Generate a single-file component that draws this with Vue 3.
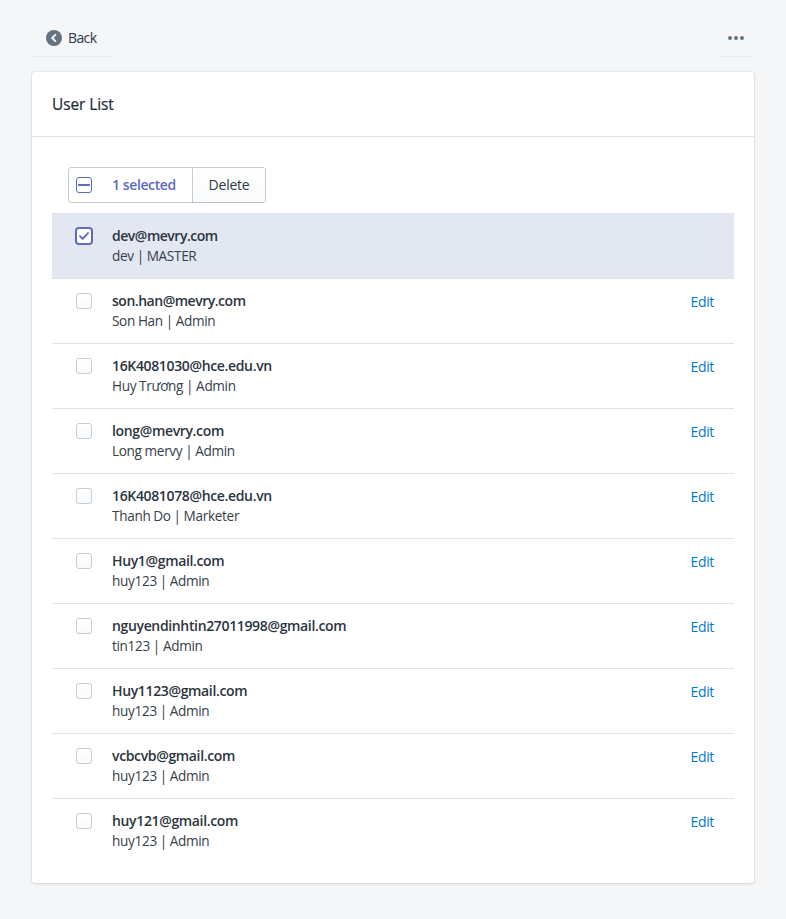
<script setup>
import { ref } from 'vue'

const users = ref([
  { email: 'dev@mevry.com', name: 'dev', role: 'MASTER', selected: true, tight: true },
  { email: 'son.han@mevry.com', name: 'Son Han', role: 'Admin', tight: true },
  { email: '16K4081030@hce.edu.vn', name: 'Huy Trương', role: 'Admin' },
  { email: 'long@mevry.com', name: 'Long mervy', role: 'Admin' },
  { email: '16K4081078@hce.edu.vn', name: 'Thanh Do', role: 'Marketer' },
  { email: 'Huy1@gmail.com', name: 'huy123', role: 'Admin' },
  { email: 'nguyendinhtin27011998@gmail.com', name: 'tin123', role: 'Admin' },
  { email: 'Huy1123@gmail.com', name: 'huy123', role: 'Admin' },
  { email: 'vcbcvb@gmail.com', name: 'huy123', role: 'Admin' },
  { email: 'huy121@gmail.com', name: 'huy123', role: 'Admin' },
])
</script>

<template>
  <main class="page">
    <header class="topbar">
      <button class="plain back">
        <svg width="16" height="16" viewBox="0 0 16 16">
          <circle cx="8" cy="8" r="8" fill="#637381" />
          <path d="M9.3 4.9 6.2 8l3.1 3.1" fill="none" stroke="#f4f6f8" stroke-width="2" stroke-linecap="round" stroke-linejoin="round" />
        </svg>
        <span>Back</span>
      </button>
      <button class="plain more" aria-label="More actions">
        <svg width="16" height="4" viewBox="0 0 16 4" fill="#637381">
          <circle cx="2" cy="2" r="2" />
          <circle cx="8" cy="2" r="2" />
          <circle cx="14" cy="2" r="2" />
        </svg>
      </button>
    </header>

    <section class="card">
      <div class="card-head"><h2>User List</h2></div>
      <div class="card-body">
        <div class="bulk">
          <div class="bulk-count">
            <span class="box partial">
              <svg width="12" height="2" viewBox="0 0 12 2"><rect width="12" height="2" rx="0.8" fill="#5c6ac4" /></svg>
            </span>
            <span class="count-label">1 selected</span>
          </div>
          <button class="bulk-delete">Delete</button>
        </div>
        <ul class="list">
          <li v-for="u in users" :key="u.email" class="row" :class="{ selected: u.selected }">
            <span class="box" :class="{ checked: u.selected }" @click="u.selected = !u.selected">
              <svg v-if="u.selected" width="10" height="8" viewBox="0 0 10 8">
                <path d="M1 4.2 3.6 6.8 9 1.1" fill="none" stroke="#5c6ac4" stroke-width="1.9" stroke-linecap="round" stroke-linejoin="round" />
              </svg>
            </span>
            <div class="info">
              <div class="email" :class="{ tight: u.tight }">{{ u.email }}</div>
              <div class="detail">{{ u.name }} | {{ u.role }}</div>
            </div>
            <a v-if="!u.selected" class="edit">Edit</a>
          </li>
        </ul>
      </div>
    </section>
  </main>
</template>

<style>
body {
  background: #f4f6f8;
}
</style>

<style scoped>
.page {
  box-sizing: border-box;
  min-height: 919px;
  padding: 20px 32px 36px;
  background: #f4f6f8;
  color: #212b36;
  font: 14px/20px "Segoe UI", "Open Sans", "Noto Sans", sans-serif;
  letter-spacing: -0.35px;
}
button {
  font: inherit;
  letter-spacing: inherit;
  color: #2f3943;
  margin: 0;
  border: 0;
  box-sizing: border-box;
}
.topbar {
  display: flex;
  justify-content: space-between;
  height: 52px;
}
.plain {
  display: flex;
  align-items: center;
  height: 36px;
  background: transparent;
  border-radius: 3px;
  box-shadow: 0 1px 0 rgba(22, 29, 37, 0.05);
}
.back {
  width: 81px;
  padding: 0 0 0 14px;
  gap: 6px;
  letter-spacing: -0.6px;
}
.more {
  width: 36px;
  justify-content: center;
  padding: 0;
}
.card {
  background: #fff;
  border-radius: 3px;
  box-shadow: 0 0 0 1px rgba(63, 63, 68, 0.05), 0 1px 3px 0 rgba(63, 63, 68, 0.15);
}
.card-head {
  box-sizing: border-box;
  height: 65px;
  padding: 21px 20px 19px;
  border-bottom: 1px solid #dfe3e8;
}
h2 {
  margin: 0;
  font-size: 15.4px;
  font-weight: 400;
  line-height: 24px;
  letter-spacing: -0.05px;
  -webkit-text-stroke: 0.2px currentColor;
}
.card-body {
  padding: 30px 20px 20px;
}
.bulk {
  display: flex;
  box-sizing: border-box;
  width: 198px;
  height: 36px;
  margin: 0 0 10px 16px;
  border: 1px solid #c4cdd5;
  border-radius: 3px;
}
.bulk-count {
  display: flex;
  align-items: center;
  box-sizing: border-box;
  width: 123px;
  padding-left: 7px;
  gap: 20px;
  color: #5c6ac4;
  font-weight: 600;
}
.bulk-delete {
  flex: 1;
  padding: 0;
  border-left: 1px solid #c4cdd5;
  border-radius: 0 2px 2px 0;
  background: linear-gradient(to bottom, #fff, #f9fafb);
  box-shadow: 0 1px 0 rgba(22, 29, 37, 0.05);
  letter-spacing: -0.25px;
}
.count-label {
  letter-spacing: -0.4px;
}
.list {
  list-style: none;
  margin: 0;
  padding: 0;
}
.row {
  display: flex;
  box-sizing: border-box;
  height: 65px;
  padding: 12px 20px 12px 24px;
  border-top: 1px solid #dfe3e8;
}
.row.selected {
  background: #e3e7f2;
}
.box {
  display: flex;
  align-items: center;
  justify-content: center;
  flex: none;
  box-sizing: border-box;
  width: 16px;
  height: 16px;
  border: 1px solid #c4cdd5;
  border-radius: 3px;
  background: linear-gradient(to bottom, #fff, #f9fafb);
}
.row .box {
  margin-top: 2px;
}
.row .box.checked {
  width: 18px;
  height: 18px;
  margin: 1px -1px 0;
  border: 2px solid #5c6ac4;
  border-radius: 4px;
  background: #fff;
}
.box.partial {
  border-color: #5c6ac4;
  background: #fff;
}
.info {
  flex: 1;
  margin-left: 20px;
}
.row .checked + .info {
  margin-left: 20px;
}
.email {
  color: #2b3540;
  font-weight: 600;
}
.email.tight {
  letter-spacing: -0.48px;
}
.detail {
  color: #36404a;
  font-size: 13.6px;
  letter-spacing: -0.33px;
  word-spacing: -0.3px;
}
.edit {
  margin-top: 1px;
  color: #007ace;
}
</style>
